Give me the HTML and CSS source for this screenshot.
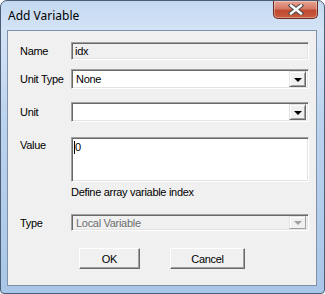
FILE: index.html
```html
<!DOCTYPE html>
<html lang="en">
<head>
    <meta charset="UTF-8">
    <title>Add Variable</title>
    <link rel="stylesheet" href="styles.css">
</head>
<body>
    <div class="window">
        <!-- Title bar -->
        <div class="titlebar">
            <span class="title">Add Variable</span>
            <div class="close-btn">
                <svg width="16" height="11" viewBox="0 0 16 11">
                    <path d="M3 1.5 L13 9.5 M13 1.5 L3 9.5" stroke="#4a4a4a" stroke-width="4.4" stroke-linecap="square"/>
                    <path d="M3 1.5 L13 9.5 M13 1.5 L3 9.5" stroke="#fff" stroke-width="2.4" stroke-linecap="square"/>
                </svg>
            </div>
        </div>

        <!-- Client area -->
        <div class="client">
            <div class="row row-name">
                <label class="lbl">Name</label>
                <div class="edit readonly">idx</div>
            </div>
            <div class="row row-unittype">
                <label class="lbl">Unit Type</label>
                <div class="combo">
                    <span class="combo-text">None</span>
                    <span class="drop"><i class="arrow"></i></span>
                </div>
            </div>
            <div class="row row-unit">
                <label class="lbl">Unit</label>
                <div class="combo">
                    <span class="combo-text"></span>
                    <span class="drop"><i class="arrow"></i></span>
                </div>
            </div>
            <div class="row row-value">
                <label class="lbl">Value</label>
                <div class="edit memo"><span class="caret"></span>0</div>
            </div>
            <div class="hint">Define array variable index</div>
            <div class="row row-type">
                <label class="lbl">Type</label>
                <div class="combo disabled">
                    <span class="combo-text">Local Variable</span>
                    <span class="drop"><i class="arrow"></i></span>
                </div>
            </div>
            <div class="buttons">
                <button class="btn btn-ok">OK</button>
                <button class="btn btn-cancel">Cancel</button>
            </div>
        </div>
    </div>
</body>
</html>
```

FILE: styles.css
```css
body {
    margin: 0;
    background: #fff;
    font-family: "Liberation Sans", Arial, sans-serif;
    font-size: 11px;
    letter-spacing: -0.3px;
    color: #000;
}
/* Outer window frame */
.window {
    width: 325px;
    height: 294px;
    box-sizing: border-box;
    border: 1px solid #4b5d75;
    border-radius: 7px 7px 4px 4px;
    background: linear-gradient(180deg, #c3d8f0 0%, #d4e4f6 10%, #bcd3ee 40%, #a9c6e8 100%);
    padding: 0 7px 7px 6px;
    display: flex;
    flex-direction: column;
}
.titlebar {
    height: 29px;
    display: flex;
    align-items: flex-start;
    justify-content: space-between;
    flex-shrink: 0;
}
.title {
    font-family: "Noto Sans", "Open Sans", sans-serif;
    font-size: 12px;
    letter-spacing: 0;
    margin-top: 6px;
    margin-left: 1px;
    color: #000;
}
.close-btn {
    width: 45px;
    height: 18px;
    margin-right: -1px;
    box-sizing: border-box;
    border: 1px solid #6b2a1e;
    border-top: none;
    border-radius: 0 0 5px 5px;
    background: linear-gradient(180deg, #e8a493 0%, #d47a66 45%, #c24a2e 55%, #c85b3f 100%);
    box-shadow: inset 0 0 0 1px rgba(255, 255, 255, 0.35);
    display: flex;
    justify-content: center;
    align-items: center;
}
/* Dialog body */
.client {
    flex: 1;
    background: #f0f0f0;
    border: 1px solid #8192a8;
    padding: 11px 7px 0 12px;
    display: flex;
    flex-direction: column;
}
.row {
    display: flex;
    align-items: center;
}
.lbl {
    width: 51px;
    flex-shrink: 0;
}
.row-unittype { margin-top: 9px; }
.row-unit { margin-top: 13px; }
.row-value { margin-top: 15px; align-items: flex-start; }
.row-value .lbl { margin-top: 2px; }
.row-type { margin-top: 15px; }
/* Sunken edit box */
.edit, .combo {
    width: 238px;
    box-sizing: border-box;
    border-top: 1px solid #a0a0a0;
    border-left: 1px solid #a0a0a0;
    border-right: 1px solid #fff;
    border-bottom: 1px solid #fff;
    box-shadow: inset 1px 1px 0 #696969, inset -1px -1px 0 #e3e3e3;
    background: #fff;
}
.edit {
    height: 18px;
    padding: 2px 3px;
    line-height: 13px;
}
.edit.readonly {
    background: #f0f0f0;
}
.memo {
    height: 45px;
    padding: 3px 2px;
}
.caret {
    display: inline-block;
    width: 1px;
    height: 13px;
    background: #000;
    vertical-align: top;
}
.hint {
    margin: 4px 0 0 51px;
    line-height: 13px;
}
/* Combo box */
.combo {
    height: 20px;
    display: flex;
    align-items: center;
    padding: 2px;
}
.combo-text {
    flex: 1;
    padding-left: 2px;
}
.drop {
    width: 17px;
    height: 16px;
    box-sizing: border-box;
    background: #f0f0f0;
    border-top: 1px solid #e3e3e3;
    border-left: 1px solid #e3e3e3;
    border-right: 1px solid #696969;
    border-bottom: 1px solid #696969;
    box-shadow: inset 1px 1px 0 #fff, inset -1px -1px 0 #a0a0a0;
    display: flex;
    justify-content: center;
    align-items: center;
}
.arrow {
    width: 0;
    height: 0;
    border-left: 4px solid transparent;
    border-right: 4px solid transparent;
    border-top: 4px solid #000;
    margin-top: 1px;
}
.combo.disabled {
    height: 17px;
    background: #f0f0f0;
    color: #6d6d6d;
}
.combo.disabled .drop {
    height: 13px;
    border-color: #e3e3e3 #a0a0a0 #a0a0a0 #e3e3e3;
    box-shadow: inset 1px 1px 0 #fff;
}
.combo.disabled .arrow {
    border-top-color: #a0a0a0;
}
/* Push buttons */
.buttons {
    display: flex;
    margin-top: 17px;
    padding-left: 59px;
    gap: 30px;
}
.btn {
    height: 21px;
    box-sizing: border-box;
    background: #f0f0f0;
    font-family: "Liberation Sans", Arial, sans-serif;
    font-size: 11px;
    letter-spacing: -0.3px;
    color: #000;
    border-top: 1px solid #fff;
    border-left: 1px solid #fff;
    border-right: 1px solid #696969;
    border-bottom: 1px solid #696969;
    box-shadow: inset -1px -1px 0 #a0a0a0;
    padding: 0;
}
.btn-ok { width: 61px; }
.btn-cancel { width: 75px; }
```
